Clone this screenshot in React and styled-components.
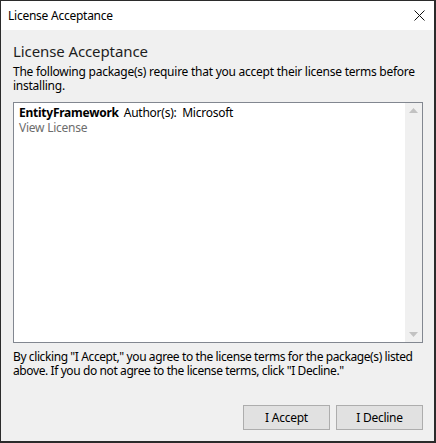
import React from "react";
import styled, { createGlobalStyle } from "styled-components";

const GlobalStyle = createGlobalStyle`
  html, body {
    margin: 0;
    padding: 0;
    background: #ffffff;
  }
  body {
    font-family: "Segoe UI", "Noto Sans", "Open Sans", sans-serif;
    font-size: 12px;
    letter-spacing: -0.25px;
    color: #000;
  }
`;

const Window = styled.div`
  box-sizing: border-box;
  width: 436px;
  height: 443px;
  border: 1px solid #2b2b2b;
  border-right-width: 2px;
  border-bottom-width: 2px;
  display: flex;
  flex-direction: column;
  background: #f0f0f0;
`;

const TitleBar = styled.div`
  height: 29px;
  flex: none;
  background: #ffffff;
  display: flex;
  align-items: center;
  justify-content: space-between;
  padding: 0 0 0 7px;
  font-size: 12px;
`;

const CloseButton = styled.div`
  width: 30px;
  height: 29px;
  display: flex;
  align-items: center;
  justify-content: center;
`;

const Body = styled.div`
  flex: 1;
  display: flex;
  flex-direction: column;
  padding: 11px 11px 11px 12px;
`;

const Heading = styled.div`
  font-size: 15px;
  line-height: 20px;
  letter-spacing: -0.1px;
  color: #1e1e1e;
`;

const Paragraph = styled.div`
  font-size: 12px;
  line-height: 14px;
  margin-top: ${(p) => p.$top || 0}px;
  letter-spacing: ${(p) => (p.$tight ? "-0.4px" : "-0.25px")};
`;

const ListBox = styled.div`
  margin-top: 9px;
  height: 241px;
  flex: none;
  box-sizing: border-box;
  border: 1px solid #828790;
  background: #ffffff;
  display: flex;
`;

const ListContent = styled.div`
  flex: 1;
  padding: 2px 5px;
`;

const PackageRow = styled.div`
  line-height: 15px;
`;

const PackageName = styled.span`
  font-weight: bold;
  margin-right: 5px;
`;

const LicenseLink = styled.div`
  color: #6d6d6d;
  line-height: 15px;
`;

const ScrollBar = styled.div`
  width: 17px;
  background: #f0f0f0;
  display: flex;
  flex-direction: column;
  justify-content: space-between;
  align-items: center;
  padding: 5px 0;
`;

const Footer = styled.div`
  margin-top: auto;
  display: flex;
  justify-content: flex-end;
  gap: 6px;
`;

const Button = styled.button`
  width: 87px;
  height: 25px;
  box-sizing: border-box;
  border: 1px solid #adadad;
  background: #e1e1e1;
  font-family: inherit;
  letter-spacing: inherit;
  font-size: 12px;
  color: #000;
  padding: 0;
`;

const Arrow = ({ up }) => (
  <svg width="9" height="5" viewBox="0 0 9 5">
    <polygon
      points={up ? "0,5 4.5,0 9,5" : "0,0 4.5,5 9,0"}
      fill="#c2c2c2"
    />
  </svg>
);

export default function App() {
  return (
    <>
      <GlobalStyle />
      <Window>
        <TitleBar>
          <span>License Acceptance</span>
          <CloseButton>
            <svg width="11" height="11" viewBox="0 0 11 11">
              <path d="M0.5 0.5 L10.5 10.5 M10.5 0.5 L0.5 10.5" stroke="#111" strokeWidth="1" />
            </svg>
          </CloseButton>
        </TitleBar>
        <Body>
          <Heading>License Acceptance</Heading>
          <Paragraph $top={4}>
            The following package(s) require that you accept their license
            terms before installing.
          </Paragraph>
          <ListBox>
            <ListContent>
              <PackageRow>
                <PackageName>EntityFramework</PackageName>
                Author(s):&nbsp; Microsoft
              </PackageRow>
              <LicenseLink>View License</LicenseLink>
            </ListContent>
            <ScrollBar>
              <Arrow up />
              <Arrow />
            </ScrollBar>
          </ListBox>
          <Paragraph $top={7} $tight>
            By clicking "I Accept," you agree to the license terms for the
            package(s) listed above. If you do not agree to the license terms,
            click "I Decline."
          </Paragraph>
          <Footer>
            <Button>I Accept</Button>
            <Button>I Decline</Button>
          </Footer>
        </Body>
      </Window>
    </>
  );
}
